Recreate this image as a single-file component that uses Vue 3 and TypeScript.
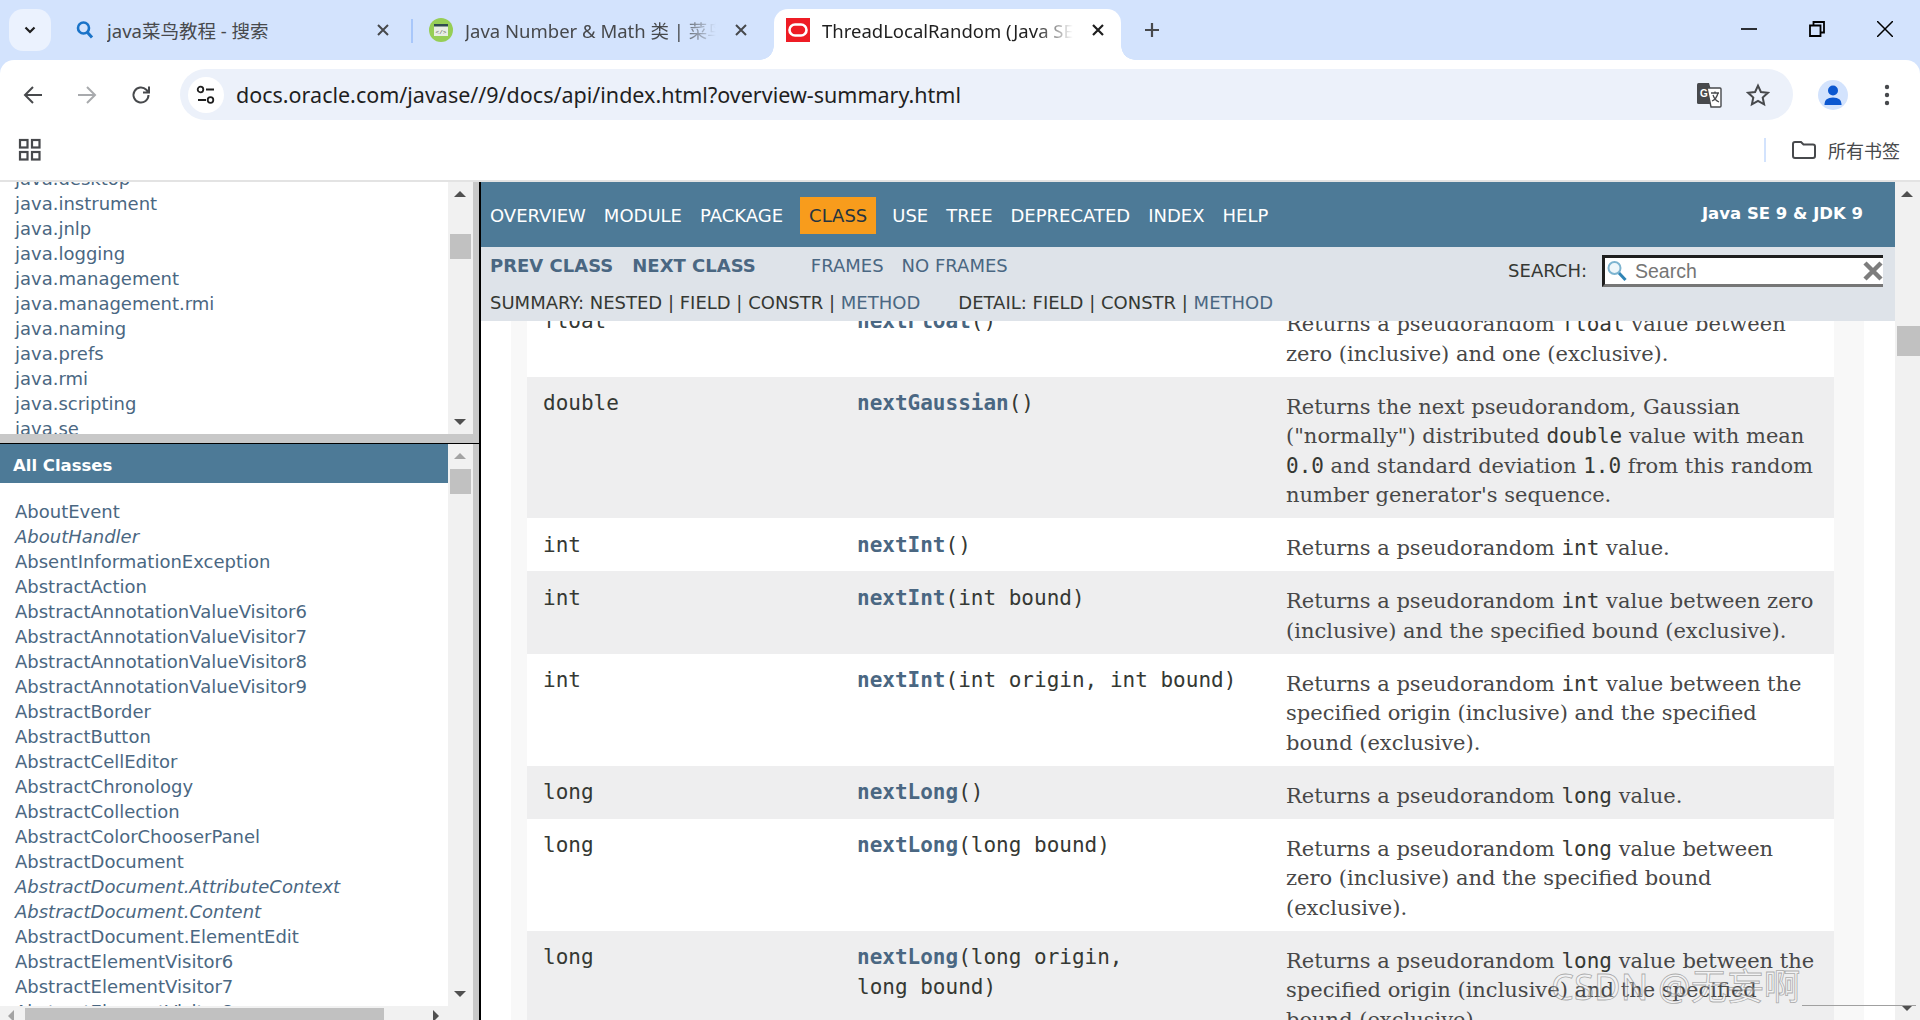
<script setup lang="ts">
const navItems = [
  { label: 'OVERVIEW' }, { label: 'MODULE' }, { label: 'PACKAGE' }, { label: 'CLASS', active: true },
  { label: 'USE' }, { label: 'TREE' }, { label: 'DEPRECATED' }, { label: 'INDEX' }, { label: 'HELP' },
]
const modules = ['java.desktop', 'java.instrument', 'java.jnlp', 'java.logging', 'java.management', 'java.management.rmi', 'java.naming', 'java.prefs', 'java.rmi', 'java.scripting', 'java.se']
const classes: { n: string; i?: boolean }[] = [
  { n: 'AboutEvent' }, { n: 'AboutHandler', i: true }, { n: 'AbsentInformationException' }, { n: 'AbstractAction' },
  { n: 'AbstractAnnotationValueVisitor6' }, { n: 'AbstractAnnotationValueVisitor7' }, { n: 'AbstractAnnotationValueVisitor8' }, { n: 'AbstractAnnotationValueVisitor9' },
  { n: 'AbstractBorder' }, { n: 'AbstractButton' }, { n: 'AbstractCellEditor' }, { n: 'AbstractChronology' }, { n: 'AbstractCollection' },
  { n: 'AbstractColorChooserPanel' }, { n: 'AbstractDocument' }, { n: 'AbstractDocument.AttributeContext', i: true }, { n: 'AbstractDocument.Content', i: true },
  { n: 'AbstractDocument.ElementEdit' }, { n: 'AbstractElementVisitor6' }, { n: 'AbstractElementVisitor7' }, { n: 'AbstractElementVisitor8' },
]
const rows = [
  { cls: 'first', type: 'float', name: 'nextFloat', args: '()', desc: 'Returns a pseudorandom <code>float</code> value between<br>zero (inclusive) and one (exclusive).' },
  { cls: 'alt', type: 'double', name: 'nextGaussian', args: '()', desc: 'Returns the next pseudorandom, Gaussian<br>("normally") distributed <code>double</code> value with mean<br><code>0.0</code> and standard deviation <code>1.0</code> from this random<br>number generator\'s sequence.' },
  { cls: '', type: 'int', name: 'nextInt', args: '()', desc: 'Returns a pseudorandom <code>int</code> value.' },
  { cls: 'alt', type: 'int', name: 'nextInt', args: '(int bound)', desc: 'Returns a pseudorandom <code>int</code> value between zero<br>(inclusive) and the specified bound (exclusive).' },
  { cls: '', type: 'int', name: 'nextInt', args: '(int origin, int bound)', desc: 'Returns a pseudorandom <code>int</code> value between the<br>specified origin (inclusive) and the specified<br>bound (exclusive).' },
  { cls: 'alt', type: 'long', name: 'nextLong', args: '()', desc: 'Returns a pseudorandom <code>long</code> value.' },
  { cls: '', type: 'long', name: 'nextLong', args: '(long bound)', desc: 'Returns a pseudorandom <code>long</code> value between<br>zero (inclusive) and the specified bound<br>(exclusive).' },
  { cls: 'alt', type: 'long', name: 'nextLong', args: '(long origin,', args2: 'long bound)', desc: 'Returns a pseudorandom <code>long</code> value between the<br>specified origin (inclusive) and the specified<br>bound (exclusive).' },
]
</script>

<template>
  <div class="app">
    <header class="tabstrip">
      <button class="tabsearch">
        <svg width="16" height="16" viewBox="0 0 16 16"><path d="M3.5 5.5 8 10l4.500-4.500" fill="none" stroke="#1f1f1f" stroke-width="2.200"/></svg>
      </button>
      <div class="tab t1">
        <svg class="fav-s" width="20" height="20" viewBox="0 0 20 20"><circle cx="8.500" cy="8" r="5.500" fill="none" stroke="#1a73c8" stroke-width="2.600"/><path d="m12.500 12.500 4.500 5" stroke="#1a73c8" stroke-width="3"/></svg>
        <span class="tab-title w1">java菜鸟教程 - 搜索</span>
        <svg class="x" width="14" height="14" viewBox="0 0 14 14"><path d="m2 2 10 10M12 2 2 12" stroke="#47494c" stroke-width="2"/></svg>
      </div>
      <i class="tab-sep"></i>
      <div class="tab t2">
        <svg width="24" height="24" viewBox="0 0 24 24"><circle cx="12" cy="12" r="12" fill="#96ce55"/><rect x="5" y="6" width="14" height="12" fill="#e9eee3"/><rect x="5" y="6" width="14" height="2.500" fill="#2f4a50"/><text x="12" y="16" font-size="6" text-anchor="middle" fill="#555" font-family="Liberation Mono">&lt;/&gt;</text></svg>
        <span class="tab-title fade w2">Java Number &amp; Math 类 | 菜鸟教程</span>
        <svg class="x" width="14" height="14" viewBox="0 0 14 14"><path d="m2 2 10 10M12 2 2 12" stroke="#47494c" stroke-width="2"/></svg>
      </div>
      <div class="tab active">
        <svg width="24" height="24" viewBox="0 0 24 24"><rect width="24" height="24" fill="#ee1c25"/><rect x="3.500" y="6.500" width="17" height="11" rx="5.500" fill="none" stroke="#fff" stroke-width="2.600"/></svg>
        <span class="tab-title fade w3">ThreadLocalRandom (Java SE 9 &amp; JDK 9 )</span>
        <svg class="x" width="14" height="14" viewBox="0 0 14 14"><path d="m2 2 10 10M12 2 2 12" stroke="#1f1f1f" stroke-width="2.200"/></svg>
      </div>
      <svg class="plus" width="18" height="18" viewBox="0 0 18 18"><path d="M9 2v14M2 9h14" stroke="#47494c" stroke-width="2.200"/></svg>
      <div class="winctl">
        <svg width="16" height="16" viewBox="0 0 16 16"><path d="M0 8h16" stroke="#000" stroke-width="1.600"/></svg>
        <svg width="16" height="16" viewBox="0 0 16 16"><path d="M1 4.500h10.500V15H1zM4.500 4.500V1H15v10.500h-3.500" fill="none" stroke="#000" stroke-width="1.800"/></svg>
        <svg width="16" height="16" viewBox="0 0 16 16"><path d="m0 0 16 16M16 0 0 16" stroke="#000" stroke-width="1.500"/></svg>
      </div>
    </header>

    <div class="toolbar">
      <svg class="tb back" width="22" height="22" viewBox="0 0 22 22"><path d="M20 11H3M11 3l-8 8 8 8" fill="none" stroke="#47494c" stroke-width="2"/></svg>
      <svg class="tb fwd" width="22" height="22" viewBox="0 0 22 22"><path d="M2 11h17M11 3l8 8-8 8" fill="none" stroke="#a8aaad" stroke-width="2"/></svg>
      <svg class="tb reload" width="22" height="22" viewBox="0 0 22 22"><path d="M18.500 11a7.500 7.500 0 1 1-2.200-5.300L19 8.500M19 2.500v6h-6" fill="none" stroke="#47494c" stroke-width="2"/></svg>
      <div class="omnibox">
        <span class="siteinfo">
          <svg width="20" height="20" viewBox="0 0 20 20"><circle cx="4.500" cy="4.500" r="2.800" fill="none" stroke="#1f1f1f" stroke-width="1.800"/><path d="M10 4.500h8M2 15h8" stroke="#1f1f1f" stroke-width="1.800"/><circle cx="14.500" cy="15" r="2.800" fill="none" stroke="#1f1f1f" stroke-width="1.800"/></svg>
        </span>
        <span class="url">docs.oracle.com/javase//9/docs/api/index.html?overview-summary.html</span>
        <svg class="translate" width="26" height="26" viewBox="0 0 26 26"><path d="M1 2.500q0-1.500 1.500-1.500H13l6 21H2.500Q1 22 1 20.500z" fill="#47494c"/><path d="M11 6h13q1 0 1 1v17q0 1-1 1H15z" fill="#fff" stroke="#47494c" stroke-width="1.400"/><text x="4" y="15" font-size="10" font-weight="700" fill="#fff" font-family="Liberation Sans">G</text><path d="M15 11h8M19 9.500V11M22 11c-1 4-3.500 7-6 8M17 13c1 3 3.500 6 6 7" fill="none" stroke="#47494c" stroke-width="1.300"/></svg>
        <svg class="star" width="24" height="24" viewBox="0 0 24 24"><path d="m12 2.600 2.900 6.400 6.900.8-5.100 4.700 1.400 6.900-6.100-3.500-6.100 3.500 1.400-6.900L2.200 9.800l6.900-.8z" fill="none" stroke="#47494c" stroke-width="2"/></svg>
      </div>
      <span class="avatar">
        <svg width="22" height="22" viewBox="0 0 22 22"><circle cx="11" cy="6.500" r="5" fill="#0b57d0"/><path d="M2.500 20q0-6.500 8.500-6.500t8.500 6.500v1h-17z" fill="#0b57d0"/></svg>
      </span>
      <svg class="menu" width="6" height="24" viewBox="0 0 6 24"><circle cx="3" cy="4" r="2.200" fill="#47494c"/><circle cx="3" cy="12" r="2.200" fill="#47494c"/><circle cx="3" cy="20" r="2.200" fill="#47494c"/></svg>
    </div>

    <div class="bookmarks">
      <svg class="apps" width="24" height="24" viewBox="0 0 24 24"><g fill="none" stroke="#47494c" stroke-width="2.200"><rect x="2" y="2" width="7.500" height="7.500"/><rect x="14" y="2" width="7.500" height="7.500"/><rect x="2" y="14" width="7.500" height="7.500"/><rect x="14" y="14" width="7.500" height="7.500"/></g></svg>
      <i class="bm-sep"></i>
      <svg class="folder" width="24" height="18" viewBox="0 0 24 18"><path d="M1 3q0-2 2-2h6l2.500 2.500H21q2 0 2 2V15q0 2-2 2H3q-2 0-2-2z" fill="none" stroke="#47494c" stroke-width="2"/></svg>
      <span class="bm-label">所有书签</span>
    </div>

    <main class="page">
      <aside class="left">
        <section class="frame top-frame">
          <div class="list-scroll">
            <div class="list modules">
              <a v-for="m in modules" :key="m">{{ m }}</a>
            </div>
          </div>
          <div class="vbar upper">
            <i class="arrow up dark"></i>
            <i class="thumb"></i>
            <i class="arrow down dark"></i>
          </div>
        </section>
        <div class="divider"></div>
        <section class="frame bottom-frame">
          <div class="list-scroll">
            <h2 class="allclasses">All Classes</h2>
            <div class="list">
              <a v-for="c in classes" :key="c.n" :class="{ ital: c.i }">{{ c.n }}</a>
            </div>
          </div>
          <div class="vbar lower">
            <i class="arrow up"></i>
            <i class="thumb"></i>
            <i class="arrow down dark"></i>
          </div>
          <div class="hbar">
            <i class="harrow l"></i>
            <i class="hthumb"></i>
            <i class="harrow r"></i>
          </div>
        </section>
      </aside>

      <section class="right">
        <div class="content">
          <nav class="topnav">
            <div class="navlinks">
              <span v-for="n in navItems" :key="n.label" class="navitem" :class="{ on: n.active }">{{ n.label }}</span>
            </div>
            <b class="brand">Java SE 9 &amp; JDK 9</b>
          </nav>
          <div class="subnav">
            <div class="sub-a">
              <div class="prevnext"><b>PREV CLASS</b><b>NEXT CLASS</b><span class="frames">FRAMES</span><span>NO FRAMES</span></div>
              <div class="summary">
                <span>SUMMARY: NESTED | FIELD | CONSTR | <a>METHOD</a></span>
                <span>DETAIL: FIELD | CONSTR | <a>METHOD</a></span>
              </div>
            </div>
            <div class="search">
              <label>SEARCH:</label>
              <div class="searchbox">
                <svg width="24" height="24" viewBox="0 0 24 24"><circle cx="9.500" cy="9" r="6" fill="#eef6fa" stroke="#7db4d0" stroke-width="2"/><path d="m14 14 6.500 7" stroke="#2f84b5" stroke-width="3"/></svg>
                <span class="ph">Search</span>
                <svg class="clear" width="20" height="20" viewBox="0 0 20 20"><path d="m2 2 16 16M18 2 2 18" stroke="#7d7d7d" stroke-width="4.500"/></svg>
              </div>
            </div>
          </div>
          <div class="docwrap">
            <div class="block">
              <div class="tablebox">
                <div v-for="(r, i) in rows" :key="i" class="row" :class="r.cls">
                  <code class="c1">{{ r.type }}</code>
                  <code class="c2"><b>{{ r.name }}</b>{{ r.args }}<template v-if="r.args2"><br>{{ r.args2 }}</template></code>
                  <div class="c3" v-html="r.desc"></div>
                </div>
              </div>
            </div>
          </div>
        </div>
        <div class="vbar main">
          <i class="arrow up dark"></i>
          <i class="thumb"></i>
          <i class="arrow down dark"></i>
        </div>
      </section>
    </main>

    <div class="watermark">CSDN @无妄啊</div>
    <i class="wm-line"></i>
  </div>
</template>

<style>
html, body { margin: 0; overflow: hidden; background: #fff; }
</style>

<style scoped>
.app { position: relative; width: 1920px; height: 1020px; overflow: hidden; display: flex; flex-direction: column; background: linear-gradient(#d3e3fd 0 74px, #fff 74px); font-family: "Noto Sans", "Noto Sans CJK SC", sans-serif; }
svg { display: block; flex: none; }
i { display: block; }

.tabstrip { height: 60px; flex: none; background: #d3e3fd; display: flex; align-items: flex-start; position: relative; }
.tabsearch { width: 42px; height: 42px; margin: 9px 0 0 9px; border: 0; padding: 0; border-radius: 14px; background: #ebf2fe; display: flex; align-items: center; justify-content: center; }
.tab { height: 51px; margin-top: 9px; padding-bottom: 9px; box-sizing: border-box; display: flex; align-items: center; font-size: 18.500px; color: #47494c; }
.t1 { margin-left: 24px; width: 335px; }
.fav-s { width: 20px; }
.tab-title { display: block; white-space: nowrap; overflow: hidden; }
.w1 { margin-left: 12px; width: 269px; }
.tab-sep { width: 2px; height: 24px; background: #a8c7fa; margin-top: 19px; margin-left: 1px; }
.t2 { margin-left: 16px; width: 345px; }
.w2 { margin-left: 12px; width: 251px; }
.t2 .x { margin-left: 18px; }
.active { width: 347px; background: #fff; border-radius: 14px 14px 0 0; color: #1f1f1f; padding-left: 12px; position: relative; }
.active::before, .active::after { content: ""; position: absolute; bottom: 0; width: 14px; height: 14px; background: radial-gradient(circle at 0 0, #d3e3fd 13.500px, #fff 14px); }
.active::before { left: -14px; }
.active::after { right: -14px; background: radial-gradient(circle at 100% 0, #d3e3fd 13.500px, #fff 14px); }
.w3 { margin-left: 12px; width: 251px; }
.active .x { margin-left: 18px; }
.fade { -webkit-mask-image: linear-gradient(to right, #000 85%, transparent 100%); mask-image: linear-gradient(to right, #000 85%, transparent 100%); }
.plus { margin: 21px 0 0 22px; }
.winctl { margin-left: auto; margin-top: 21px; margin-right: 27px; display: flex; gap: 52px; }

.toolbar { height: 60px; flex: none; display: flex; align-items: flex-start; background: #fff; border-radius: 14px 14px 0 0; position: relative; }
.tb { margin-top: 24px; }
.back { margin-left: 22px; }
.fwd { margin-left: 32px; }
.reload { margin-left: 32px; }
.omnibox { margin: 9px 0 0 28px; width: 1613px; height: 51px; border-radius: 26px; background: #ecf1fa; display: flex; align-items: center; }
.siteinfo { width: 36px; height: 36px; margin-left: 8px; border-radius: 50%; background: #fff; display: flex; align-items: center; justify-content: center; }
.url { margin-left: 12px; margin-top: -1px; font-size: 21.500px; color: #1f1f1f; white-space: nowrap; }
.translate { margin-left: auto; }
.star { margin: 0 23px 0 24px; }
.avatar { margin: 20px 0 0 25px; width: 30px; height: 30px; border-radius: 50%; background: #d3e3fd; display: flex; align-items: center; justify-content: center; }
.menu { margin: 23px 0 0 36px; }

.bookmarks { height: 60px; flex: none; display: flex; align-items: center; background: #fff; }
.apps { margin-left: 18px; }
.bm-sep { margin-left: auto; width: 2px; height: 24px; background: #d3e3fd; }
.folder { margin-left: 26px; }
.bm-label { margin: 0 20px 0 12px; font-size: 18px; color: #47494c; }

.page { flex: 1; min-height: 0; display: flex; border-top: 2px solid #e3e3e3; }
.left { width: 479px; flex: none; box-sizing: border-box; background: #c8c8c8; padding-right: 6px; display: flex; flex-direction: column; overflow: hidden; }
.frame { position: relative; display: flex; overflow: hidden; background: #fff; }
.top-frame { height: 252px; flex: none; }
.divider { height: 10px; box-sizing: border-box; flex: none; background: #c8c8c8; border-bottom: 1px solid #000; margin-right: -6px; }
.bottom-frame { flex: 1; min-height: 0; }
.list-scroll { flex: 1; min-width: 0; overflow: hidden; }
.list { display: flex; flex-direction: column; padding-left: 15px; font-family: "DejaVu Sans", sans-serif; font-size: 18px; line-height: 25px; color: #4a6782; white-space: nowrap; }
.modules { margin-top: -16px; }
.bottom-frame .list { padding-top: 16px; }
.ital { font-style: italic; }
.allclasses { margin: 0; height: 39px; box-sizing: border-box; line-height: 39px; padding: 2px 0 0 13px; background: #4d7a97; color: #fff; font-family: "DejaVu Sans", sans-serif; font-size: 16.500px; font-weight: 700; }

.vbar { width: 25px; flex: none; background: #f1f1f1; position: relative; display: flex; flex-direction: column; align-items: center; }
.arrow { width: 0; height: 0; border-left: 6px solid transparent; border-right: 6px solid transparent; position: absolute; left: 6px; }
.arrow.up { top: 9px; border-bottom: 6px solid #a3a3a3; }
.arrow.down { bottom: 9px; border-top: 6px solid #505050; }
.arrow.up.dark { border-bottom-color: #505050; }
.thumb { position: absolute; left: 2px; right: 2px; background: #c1c1c1; }
.upper .thumb { top: 52px; height: 25px; }
.lower .thumb { top: 25px; height: 25px; }
.lower { margin-bottom: 14px; }
.hbar { position: absolute; left: 0; right: 0; bottom: 0; height: 14px; background: #f1f1f1; }
.hthumb { position: absolute; left: 25px; width: 359px; top: 2px; bottom: 0; background: #c1c1c1; }
.harrow { position: absolute; top: 4px; width: 0; height: 0; border-top: 6px solid transparent; border-bottom: 6px solid transparent; }
.harrow.l { left: 8px; border-right: 6px solid #a3a3a3; }
.harrow.r { left: 433px; border-left: 6px solid #505050; }

.right { flex: 1; min-width: 0; display: flex; border-left: 2px solid #000; }
.content { flex: 1; min-width: 0; display: flex; flex-direction: column; overflow: hidden; }
.topnav { height: 65px; flex: none; background: #4d7a97; color: #fff; display: flex; align-items: center; justify-content: space-between; padding: 0 32px 0 9px; font-family: "DejaVu Sans", sans-serif; font-size: 18px; }
.navlinks { display: flex; align-items: center; padding-top: 1px; }
.navitem { margin-right: 18px; }
.navitem.on { margin: 0 16px 0 -1px; background: #f89c1c; color: #253441; height: 37px; line-height: 37px; padding: 0 9px; }
.brand { font-size: 16.500px; margin-top: -3px; }
.subnav { height: 74px; flex: none; background: #dee3e9; color: #353833; font-family: "DejaVu Sans", sans-serif; font-size: 18px; display: flex; justify-content: space-between; padding: 0 11px 0 9px; }
.prevnext { display: flex; height: 37px; align-items: center; color: #4a6782; }
.prevnext b { margin-right: 19px; }
.prevnext span { margin-right: 18px; }
.prevnext .frames { margin-left: 36px; }
.summary { display: flex; gap: 38px; height: 37px; align-items: center; white-space: pre; }
.summary a { color: #4a6782; }
.search { display: flex; align-items: flex-start; padding-top: 8px; }
.search label { margin-top: 5px; margin-right: 15px; }
.searchbox { width: 281px; height: 32px; box-sizing: border-box; margin-right: 1px; border-style: solid; border-width: 3px 0 3px 3px; border-color: #1f1f1f #767676 #767676 #1f1f1f; background: #fff; display: flex; align-items: center; font-family: "Liberation Sans", sans-serif; font-size: 19.500px; color: #757575; }
.searchbox svg { margin-left: 0; }
.ph { margin-left: 6px; }
.searchbox .clear { margin-left: auto; }

.docwrap { flex: 1; min-height: 0; padding: 0 31px 0 30px; overflow: hidden; }
.block { min-height: 800px; background: #f8f8f8; padding: 0 30px 0 16px; }
.tablebox { background: #fff; }
.row { display: grid; grid-template-columns: 314px 429px 1fr; box-sizing: border-box; padding-left: 16px; font-family: "DejaVu Serif", serif; font-size: 21px; line-height: 29.500px; color: #474747; }
.row.alt { background: #eeeeef; }
.row.first { margin-top: -27px; }
.c1, .c2 { padding-top: 11.500px; font-family: "DejaVu Sans Mono", monospace; font-size: 21px; color: #353833; line-height: 30px; white-space: nowrap; }
.c2 b { color: #4a6782; }
.c3 { padding: 16px 0 7.500px; white-space: nowrap; }
.c3 :deep(code) { font-family: "DejaVu Sans Mono", monospace; font-size: 21px; line-height: 1; color: #353833; }

.main { height: 100%; }
.main .thumb { top: 144px; height: 30px; left: 2px; right: 0; }

.watermark { position: absolute; left: 1551px; top: 958px; font-size: 36.500px; color: rgba(255, 255, 255, .3); -webkit-text-stroke: .8px rgba(110, 110, 110, .55); font-family: "Noto Sans", "Noto Sans CJK SC", sans-serif; white-space: nowrap; }
.wm-line { position: absolute; left: 1802px; top: 1005px; width: 114px; height: 1px; background: #a0a0a0; }
</style>
